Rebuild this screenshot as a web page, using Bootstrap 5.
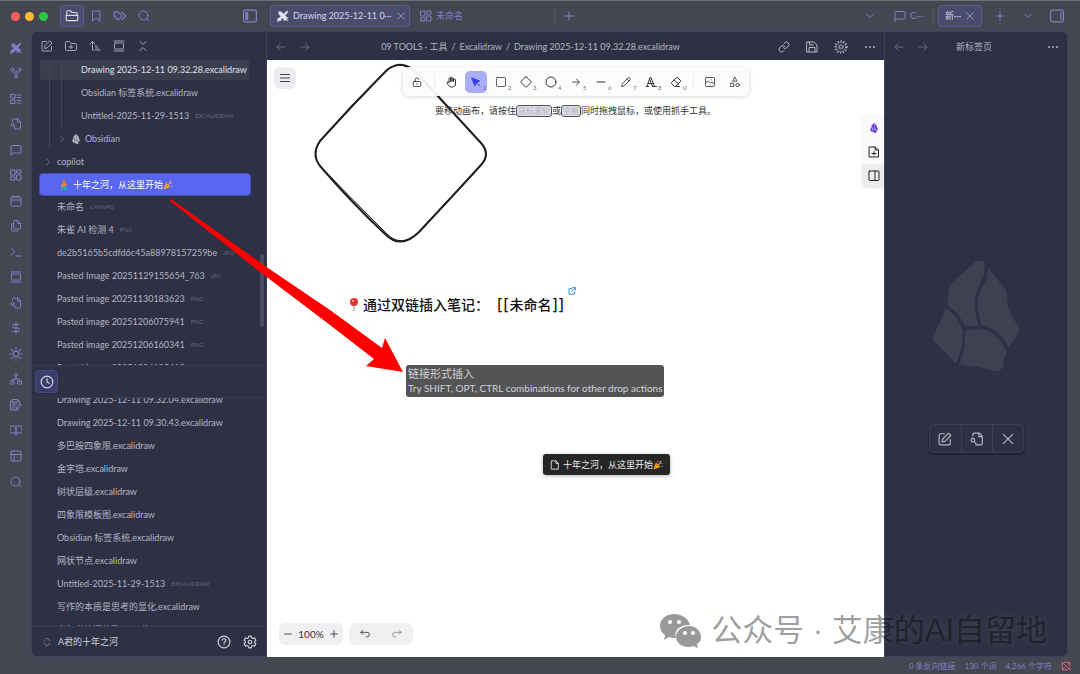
<!DOCTYPE html>
<html lang="zh-CN">
<head>
<meta charset="utf-8">
<meta name="viewport" content="width=device-width, initial-scale=1">
<title>Obsidian</title>
<link rel="stylesheet" href="https://cdn.jsdelivr.net/npm/bootstrap@5.3.0/dist/css/bootstrap.min.css">
<style>
  :root { --frame:#444652; --panel:#2e3044; --edge:#3d3f5e; --accent:#7f81c6; --txt:#b4b5c3; --dim:#8b8d9f; --faint:#66687b; }
  body { font-family:Lato,"Noto Sans CJK SC",sans-serif; font-size:9px; line-height:14px; color:var(--txt); background:var(--frame); }
  .app { border-top:1px solid #6c6e79; overflow:hidden; }
  svg { display:block; flex:none; }
  .ic { width:14px; height:14px; fill:none; stroke:currentColor; stroke-width:2; stroke-linecap:round; stroke-linejoin:round; }
  .ic-s { width:12px; height:12px; }
  .ic-xs { width:10px; height:10px; }
  button { background:none; border:0; padding:0; color:inherit; display:flex; align-items:center; justify-content:center; }
  a { color:inherit; text-decoration:none; }

  .topbar { height:30px; color:var(--accent); }
  .top-left { width:266px; padding:0 9px 0 11px; }
  .top-right { width:196px; padding-left:4px; }
  .lights { gap:5px; }
  .light { width:9px; height:9px; border-radius:50%; }
  .tool { width:24px; height:22px; border-radius:4px; border:1px solid transparent; }
  .tool-on, .tab-on { background:#4a4c6c; border:1px solid #5a5d8e; color:#d6d7e4; }
  .tab-item { height:22px; border-radius:4px; padding:0 6px; gap:4px; white-space:nowrap; }
  .tab-wide { width:140px; justify-content:flex-start; }
  .tab-on .ic-xs { color:#9a9cdc; }
  .rule { width:1px; height:14px; background:#53566a; }

  .ribbon { width:31px; color:var(--accent); }
  .ribbon nav { height:74%; padding-top:4px; }
  .ribbon button { flex:1 1 0; width:100%; }
  .side { width:236px; background:var(--panel); border:1px solid var(--edge); border-radius:6px 0 0 6px; overflow:hidden; }
  .side-tools { height:28px; padding:0 9px; gap:12px; color:#a3a5b5; }
  .files { overflow:hidden; position:relative; }
  .files-main { flex:306 1 0; }
  .files-recent { flex:228 1 0; }
  .files-recent .file:first-child { margin-top:5px; }
  .file { height:23px; padding-left:25px; gap:6px; white-space:nowrap; flex:none; }
  .in1 { padding-left:49px; }
  .file small { font-size:6px; color:var(--faint); }
  .file-on, .file-pick { height:21px; border-radius:3px; }
  .file-on { margin:-1px 17px 1px 8px; padding-left:41px; background:#3c3e50; color:#dfe0e8; }
  .file-pick { margin:1px 16px 0 8px; padding-left:18px; background:#5865ee; gap:3px; color:#fff; box-shadow:0 0 0 1px #484bb0; }
  .fold { padding-left:11px; gap:4px; }
  .guide { position:absolute; top:0; width:1px; background:#45475a; }
  .thumb { position:absolute; right:2px; width:4px; height:73px; border-radius:2px; background:#4a4c5f; top:194px; }
  .recent-head { height:33px; border-top:1px solid #383a50; border-bottom:1px solid #383a50; padding:0 3px; }
  .recent-head button { width:23px; height:23px; border-radius:4px; background:#3a3d68; border:1px solid #484b86; color:#d6d7e4; }
  .vault { height:30px; border-top:1px solid #3a3c52; padding:0 9px 0 10px; color:#d0d1dc; }
  .vault button { gap:6px; }

  .view-head { height:29px; padding-top:1px; background:var(--panel); border-top:1px solid var(--edge); }
  .canvas { background:#fff; position:relative; overflow:hidden; color:#333; }
  .shape { position:absolute; left:47px; top:2px; }
  .menu-btn { position:absolute; left:7px; top:7px; width:22px; height:22px; border-radius:6px; background:#ececf0; color:#444; }
  .xtools { position:absolute; left:50%; top:7px; transform:translateX(-50%); height:29px; padding:0 3px; border-radius:6px; background:rgba(252,252,252,.94); box-shadow:0 1px 4px rgba(0,0,0,.16); }
  .xtools button { width:22px; height:22px; margin-right:3px; border-radius:5px; position:relative; color:#333; }
  .xtools button:last-child { margin-right:0; }
  .xtools sub { position:absolute; right:0; bottom:2px; font-size:6px; line-height:6px; color:#777; }
  .xtools .picked { background:#a8adf6; color:#3a3ce0; }
  .xtools .picked sub { color:#5558e0; }
  .xtools .rule { background:#eee; margin:0 5px 0 3px; }
  .hint { position:absolute; left:0; right:0; top:44px; white-space:nowrap; }
  .hint kbd { font:inherit; line-height:10px; font-size:8px; color:#b4b4cc; background:#dcdce2; border:1px solid #555; border-radius:3px; padding:0 1px; }
  .floatbar { position:absolute; right:0; top:56px; width:22px; border-radius:6px 0 0 6px; background:#fafafa; box-shadow:0 0 2px rgba(0,0,0,.14); color:#222; overflow:hidden; }
  .floatbar button { width:100%; height:24px; padding-left:2px; }
  .floatbar .lit { background:#ededed; }
  .note { position:absolute; left:82px; top:227px; font-size:14px; line-height:36px; font-weight:500; color:#111; white-space:nowrap; }
  .note b { font-family:"DejaVu Sans",sans-serif; font-size:16px; font-weight:400; line-height:1; }
  .tip { position:absolute; left:139px; top:305px; padding:2px; line-height:14px; font-size:11px; border-radius:3px; background:#545454; color:#d2d2dc; white-space:nowrap; }
  .tip p { margin:0; }
  .tip p + p { font-size:10px; }
  .ghost { position:absolute; left:276px; top:394px; height:21px; padding:0 7px; gap:3px; border-radius:3px; background:#262626; color:#eee; box-shadow:0 1px 4px rgba(0,0,0,.3); white-space:nowrap; }
  .zoomer { position:absolute; left:12px; bottom:12px; gap:6px; color:#333; }
  .zoomer > div { width:64px; height:22px; border-radius:6px; background:#f0f0f2; }
  .zoomer .pct { font-size:10px; }

  .right { width:184px; background:var(--panel); border:1px solid var(--edge); border-radius:0 6px 6px 0; }
  .right .view-head { border:0; height:28px; background:none; }
  .crystal { color:#3f4153; margin-top:200px; }
  .acts { margin-top:52px; border-radius:4px; border:1px solid #3b3d50; box-shadow:0 1px 2px rgba(0,0,0,.5); color:#b4b5c3; }
  .acts button { width:31px; height:27px; }
  .acts button + button { border-left:1px solid #3d3f5c; }
  .gutter { width:12px; }
  .status { height:17px; padding:0 9px; gap:9px; color:var(--accent); font-size:8px; }
  .arrow { position:absolute; left:168px; top:197px; pointer-events:none; }
  .mark-line { position:absolute; right:33px; bottom:23px; font-size:31px; line-height:40px; gap:9px; color:rgba(0,0,0,.4); text-shadow:0 0 8px rgba(255,255,255,.12); font-family:"Liberation Sans","Noto Sans CJK SC",sans-serif; white-space:nowrap; pointer-events:none; }
</style>
</head>
<body>
<svg width="0" height="0" class="position-absolute" aria-hidden="true">
  <symbol id="folder-open" viewBox="0 0 24 24"><path d="M3 11V5a2 2 0 0 1 2-2h4l3 3h7a2 2 0 0 1 2 2v3M2 11h20v7a2 2 0 0 1-2 2H4a2 2 0 0 1-2-2z"/></symbol>
  <symbol id="bookmark" viewBox="0 0 24 24"><path d="m19 22-7-6-7 6V2h14z"/></symbol>
  <symbol id="tags" viewBox="0 0 24 24"><path d="M9 5H2v7l6.3 6.3a1 1 0 0 0 1.4 0l5.6-5.6a1 1 0 0 0 0-1.4zM6 9h.01M15 5l6.3 6.3a1 1 0 0 1 0 1.4L16 18"/></symbol>
  <symbol id="search" viewBox="0 0 24 24"><circle cx="11" cy="11" r="9"/><path d="m22 22-4-4"/></symbol>
  <symbol id="side-l" viewBox="0 0 24 24"><rect x="1" y="2" width="22" height="20" rx="3"/><path d="M5 6h3v12H5z" fill="currentColor"/></symbol>
  <symbol id="side-r" viewBox="0 0 24 24"><rect x="1" y="2" width="22" height="20" rx="3"/><path d="M19 6v12"/></symbol>
  <symbol id="swords" viewBox="0 0 24 24"><path d="M4 3l5 1 4 4 6-5 3-1-1 3-5 6 4 4 1-1 1 1-3 3 3 3-1 1-3-3-3 3-1-1 1-1-4-4-4 4 1 1-1 1-3-1-3 3-1-1 2-3-1-3 1-1 1 1 5-4-4-4z" fill="currentColor" stroke-width="1"/></symbol>
  <symbol id="x" viewBox="0 0 24 24"><path d="M20 4 4 20M4 4l16 16"/></symbol>
  <symbol id="plus" viewBox="0 0 24 24"><path d="M4 12h16M12 4v16"/></symbol>
  <symbol id="minus" viewBox="0 0 24 24"><path d="M4 12h16"/></symbol>
  <symbol id="down" viewBox="0 0 24 24"><path d="m5 8 7 7 7-7"/></symbol>
  <symbol id="next" viewBox="0 0 24 24"><path d="m9 5 7 7-7 7"/></symbol>
  <symbol id="grid4" viewBox="0 0 24 24"><path d="M2 2h8v10H2zM14 2h8v6h-8zM14 12h8v10h-8zM2 16h8v6H2z"/></symbol>
  <symbol id="msg" viewBox="0 0 24 24"><path d="M2 22V5a2 2 0 0 1 2-2h16a2 2 0 0 1 2 2v11a2 2 0 0 1-2 2H6z"/></symbol>
  <symbol id="fork" viewBox="0 0 24 24"><circle cx="12" cy="19" r="3"/><circle cx="5" cy="5" r="3"/><circle cx="19" cy="5" r="3"/><circle cx="12" cy="9" r="1"/><path d="M5 8c0 4 3 4 7 5 4-1 7-1 7-5M12 13v3"/></symbol>
  <symbol id="list" viewBox="0 0 24 24"><path d="M2 3h8v7H2zM2 14h8v7H2zM14 4h8M14 9h8M14 15h8M14 20h8"/></symbol>
  <symbol id="file-search" viewBox="0 0 24 24"><path d="M5 7V4a2 2 0 0 1 2-2h9l5 5v13a2 2 0 0 1-2 2h-9M15 2v6h6"/><circle cx="5" cy="14" r="3"/><path d="m8 17 3 4"/></symbol>
  <symbol id="cal" viewBox="0 0 24 24"><rect x="2" y="4" width="20" height="18" rx="2"/><path d="M8 1v5M16 1v5M2 10h20"/></symbol>
  <symbol id="files" viewBox="0 0 24 24"><path d="M21 7h-4a2 2 0 0 1-2-2V1H9a2 2 0 0 0-2 2v13a2 2 0 0 0 2 2h10a2 2 0 0 0 2-2V7zM15 1l6 6M3 7v13a2 2 0 0 0 2 2h10"/></symbol>
  <symbol id="term" viewBox="0 0 24 24"><path d="m2 18 8-7-8-7M12 20h10"/></symbol>
  <symbol id="cards" viewBox="0 0 24 24"><path d="M2 2h20M2 22h20"/><rect x="3" y="6" width="18" height="12" rx="1"/></symbol>
  <symbol id="dollar" viewBox="0 0 24 24"><path d="M12 1v22M18 5H9a3 3 0 0 0 0 7h6a3 3 0 0 1 0 7H5"/></symbol>
  <symbol id="sun" viewBox="0 0 24 24"><circle cx="12" cy="12" r="5"/><path d="M12 1v2M12 21v2M4 4l2 2M18 18l2 2M1 12h2M21 12h2M6 18l-2 2M20 4l-2 2"/></symbol>
  <symbol id="tree" viewBox="0 0 24 24"><circle cx="12" cy="4" r="3"/><path d="M1 16h7v6H1zM16 16h7v6h-7zM5 16v-4h14v4M12 12V8"/></symbol>
  <symbol id="clip" viewBox="0 0 24 24"><path d="M16 4h3v4M5 4H1v18h15v-3M5 1h10v5H5zM5 10h8M5 14h5M5 18h5M13 19l1-4 7-6 2 3-7 6z"/></symbol>
  <symbol id="book" viewBox="0 0 24 24"><path d="M1 4h8a3 3 0 0 1 3 3v14a3 3 0 0 0-3-3H1zM23 4h-8a3 3 0 0 0-3 3v14a3 3 0 0 1 3-3h8z"/></symbol>
  <symbol id="layout" viewBox="0 0 24 24"><rect x="2" y="2" width="20" height="20" rx="2"/><path d="M2 9h20M8 9v13"/></symbol>
  <symbol id="edit" viewBox="0 0 24 24"><path d="M11 3H4a2 2 0 0 0-2 2v15a2 2 0 0 0 2 2h15a2 2 0 0 0 2-2v-7M18 2l4 4-10 10-5 1 1-5z"/></symbol>
  <symbol id="folder-plus" viewBox="0 0 24 24"><path d="M3 21a2 2 0 0 1-2-2V5a2 2 0 0 1 2-2h6l3 4h9a2 2 0 0 1 2 2v10a2 2 0 0 1-2 2zM12 10v7M8 14h8"/></symbol>
  <symbol id="sort" viewBox="0 0 24 24"><path d="m2 8 5-5 5 5M7 3v17h3M13 12h3M13 16h6M13 20h9"/></symbol>
  <symbol id="fold" viewBox="0 0 24 24"><path d="m6 21 6-6 6 6M6 3l6 6 6-6"/></symbol>
  <symbol id="updown" viewBox="0 0 24 24"><path d="m5 15 7 7 7-7M5 9l7-7 7 7"/></symbol>
  <symbol id="clock" viewBox="0 0 24 24"><circle cx="12" cy="12" r="10"/><path d="M12 6v6l4 2"/></symbol>
  <symbol id="help" viewBox="0 0 24 24"><circle cx="12" cy="12" r="10"/><path d="M9 9a3 3 0 0 1 6 1c0 2-3 2-3 4M12 17v.01"/></symbol>
  <symbol id="gear" viewBox="0 0 24 24"><path d="M10 2h4l1 3 2 1 3-1 2 4-2 2v2l2 2-2 4-3-1-2 1-1 3h-4l-1-3-2-1-3 1-2-4 2-2v-2L2 9l2-4 3 1 2-1z"/><circle cx="12" cy="12" r="3"/></symbol>
  <symbol id="cog" viewBox="0 0 24 24"><circle cx="12" cy="12" r="10" stroke-width="3" stroke-dasharray="2 3" stroke-linecap="butt"/><circle cx="12" cy="12" r="8" stroke-width="1"/><circle cx="12" cy="12" r="4" stroke-width="1"/><path d="M10 10h4v4h-4z" stroke-width="1"/></symbol>
  <symbol id="left" viewBox="0 0 24 24"><path d="m11 19-7-7 7-7M20 12H4"/></symbol>
  <symbol id="right" viewBox="0 0 24 24"><path d="m13 5 7 7-7 7M4 12h16"/></symbol>
  <symbol id="link" viewBox="0 0 24 24"><path d="M10 13a5 5 0 0 0 7 1l4-4a5 5 0 0 0-7-7l-2 2M14 11a5 5 0 0 0-7-1l-4 4a5 5 0 0 0 7 7l2-2"/></symbol>
  <symbol id="save" viewBox="0 0 24 24"><path d="M2 2h14l6 6v14H2zM7 2v6h8M6 22v-9h12v9"/></symbol>
  <symbol id="dots" viewBox="0 0 24 24"><path d="M4 12h.01M12 12h.01M20 12h.01" stroke-width="4"/></symbol>
  <symbol id="menu" viewBox="0 0 24 24"><path d="M3 5h18M3 12h18M3 19h18"/></symbol>
  <symbol id="lock" viewBox="0 0 24 24"><rect x="3" y="11" width="18" height="12" rx="2"/><path d="M8 11V6a4 4 0 0 1 8 0M12 16v2"/></symbol>
  <symbol id="hand" viewBox="0 0 24 24"><path d="M8 13V5a2 2 0 0 1 3 0v6V3a2 2 0 0 1 3 0v8V5a2 2 0 0 1 3 0v7V8a2 2 0 0 1 4 0v8c0 4-3 6-7 6-4 0-6-1-8-5l-2-3a2 2 0 0 1 4-1z"/></symbol>
  <symbol id="cursor" viewBox="0 0 24 24"><path d="m4 4 15 6-6 3-3 6z" fill="currentColor"/><path d="m14 14 6 6"/></symbol>
  <symbol id="rect" viewBox="0 0 24 24"><rect x="1" y="1" width="22" height="22" rx="3"/></symbol>
  <symbol id="diamond" viewBox="0 0 24 24"><path d="m13 2 9 9q1 1 0 2l-9 9q-1 1-2 0l-9-9q-1-1 0-2l9-9q1-1 2 0z"/></symbol>
  <symbol id="circle" viewBox="0 0 24 24"><circle cx="12" cy="12" r="10"/></symbol>
  <symbol id="pencil" viewBox="0 0 24 24"><path d="m2 22 1-6L17 2q2-1 4 1t1 4L8 21zM14 5l5 5"/></symbol>
  <symbol id="glyph" viewBox="0 0 24 24"><path d="M2 21h5M15 21h8M4 21l6-18h2l7 18M7 15h9M9 6l6 15"/></symbol>
  <symbol id="eraser" viewBox="0 0 24 24"><path d="M19 21H9l-6-6q-1-1 0-2L13 3q1-1 2 0l6 6q1 1 0 2L11 21M8 8l9 8"/></symbol>
  <symbol id="image" viewBox="0 0 24 24"><rect x="1" y="1" width="22" height="22" rx="3"/><path d="m2 14 6-4 6 5 3-3 5 4M16 7h.01"/></symbol>
  <symbol id="shapes" viewBox="0 0 24 24"><path d="m12 1 5 9H7zM1 15h8v8H1z"/><circle cx="18" cy="19" r="4"/></symbol>
  <symbol id="file" viewBox="0 0 24 24"><path d="M4 2h10l6 6v14H4zM14 2v6h6"/></symbol>
  <symbol id="file-plus" viewBox="0 0 24 24"><path d="M3 2h11l7 6v14H3zM14 2v6h7M12 11v7M8 15h8"/></symbol>
  <symbol id="panel" viewBox="0 0 24 24"><rect x="2" y="2" width="20" height="19" rx="1"/><path d="M14 2v19"/></symbol>
  <symbol id="ext" viewBox="0 0 24 24"><path d="M11 5H3v17h16v-8M14 2h8v8M22 2 11 13" stroke-width="3"/></symbol>
  <symbol id="undo" viewBox="0 0 24 24"><path d="M7 3 2 8l5 5M2 8h15a5 5 0 0 1 0 11h-2"/></symbol>
  <symbol id="redo" viewBox="0 0 24 24"><path d="m17 3 5 5-5 5M22 8H7a5 5 0 0 0 0 11h2"/></symbol>
  <symbol id="nosync" viewBox="0 0 24 24"><path d="M2 2l20 20M8 3h13v9M21 3l-5 5M3 8v13h12M3 21l6-6M3 3v3M21 16v5"/></symbol>
  <symbol id="crystal" viewBox="100 59 260 334"><g fill="currentColor" stroke="none"><path d="M152 130 228 64Q238 57 250 62 254 66 254 90 253 105 245 118 228 150 224 180 224 215 232 240L236 255Q215 255 195 257 180 218 143 193L147 150Q148 135 152 130Z"/><path d="M264 81 316 145Q319 150 320 160 322 190 326 205 332 222 352 252 360 265 358 272L326 321Q303 267 246 255 228 195 235 170 242 148 258 120 264 105 264 81Z"/><path d="M138 203Q178 230 188 270 192 320 168 367L104 302Q99 296 101 288Z"/><path d="M197 270Q240 260 270 272 305 293 320 334 309 360 310 375 303 393 285 392 235 376 178 372 198 325 197 270Z"/></g></symbol>
  <symbol id="party" viewBox="0 0 24 24"><path d="m1 23 6-17 11 11z" fill="#f6b21b"/><path d="m4 15 5 6M6 9l9 10" stroke="#c9661c" stroke-width="2"/><path d="M9 8q4-2 3-7M14 12q3-5 9-4" stroke="#e8508a" stroke-width="2" fill="none"/><path d="M16 3h3v3h-3zM20 14h3v3h-3z" fill="#6fb8f2"/><path d="M12 11q6-2 8-8" stroke="#f1d04a" stroke-width="2" fill="none"/></symbol>
  <symbol id="walker" viewBox="0 0 24 24"><circle cx="12" cy="4" r="3" fill="#c9743c"/><path d="m9 8 6 0 4 5-4 0 0 3H9l-4-2z" fill="#ee8a2a"/><path d="m10 15-3 8M13 15l3 8" stroke="#25b0b0" stroke-width="4"/></symbol>
</svg>

<div class="app d-flex flex-column vh-100 position-relative">
  <header class="topbar d-flex">
    <div class="top-left d-flex align-items-center">
      <div class="lights d-flex"><span class="light" style="background:#ff5f57"></span><span class="light" style="background:#febc2e"></span><span class="light" style="background:#28c840"></span></div>
      <div class="d-flex ms-2 ps-1">
        <button class="tool tool-on" aria-label="文件列表"><svg class="ic"><use href="#folder-open"/></svg></button>
        <button class="tool" aria-label="书签"><svg class="ic ic-s"><use href="#bookmark"/></svg></button>
        <button class="tool" aria-label="标签"><svg class="ic"><use href="#tags"/></svg></button>
        <button class="tool" aria-label="搜索"><svg class="ic ic-s"><use href="#search"/></svg></button>
      </div>
      <button class="ms-auto" aria-label="折叠侧栏"><svg class="ic"><use href="#side-l"/></svg></button>
    </div>
    <div class="flex-fill d-flex align-items-center ps-1 pe-2">
      <button class="tab-item tab-wide tab-on"><svg class="ic ic-s" style="color:#e4e4ee"><use href="#swords"/></svg><span>Drawing 2025-12-11 0···</span><svg class="ic ic-xs ms-auto"><use href="#x"/></svg></button>
      <button class="tab-item tab-wide ms-1"><svg class="ic ic-s"><use href="#grid4"/></svg><span>未命名</span></button>
      <span class="rule"></span>
      <button class="ms-2" aria-label="新标签页"><svg class="ic ic-s"><use href="#plus"/></svg></button>
      <button class="ms-auto" aria-label="标签列表"><svg class="ic ic-s"><use href="#down"/></svg></button>
    </div>
    <div class="top-right d-flex align-items-center">
      <button class="tab-item"><svg class="ic ic-s"><use href="#msg"/></svg><span>C···</span></button>
      <span class="rule ms-1 me-1"></span>
      <button class="tab-item tab-on"><span>新···</span><svg class="ic ic-xs"><use href="#x"/></svg></button>
      <button class="ms-2 ps-1" aria-label="新标签页"><svg class="ic ic-s"><use href="#plus"/></svg></button>
      <button class="ms-auto me-3" aria-label="标签列表"><svg class="ic ic-s"><use href="#down"/></svg></button>
      <button class="me-3" aria-label="折叠侧栏"><svg class="ic"><use href="#side-r"/></svg></button>
    </div>
  </header>

  <main class="d-flex flex-fill" style="min-height:0">
    <aside class="ribbon">
      <nav class="d-flex flex-column" aria-label="功能区">
        <button aria-label="Excalidraw"><svg class="ic ic-s"><use href="#swords"/></svg></button>
        <button aria-label="关系图谱"><svg class="ic ic-s"><use href="#fork"/></svg></button>
        <button aria-label="看板"><svg class="ic ic-s"><use href="#list"/></svg></button>
        <button aria-label="查找文件"><svg class="ic ic-s"><use href="#file-search"/></svg></button>
        <button aria-label="聊天"><svg class="ic ic-s"><use href="#msg"/></svg></button>
        <button aria-label="白板"><svg class="ic ic-s"><use href="#grid4"/></svg></button>
        <button aria-label="日记"><svg class="ic ic-s"><use href="#cal"/></svg></button>
        <button aria-label="模板"><svg class="ic ic-s"><use href="#files"/></svg></button>
        <button aria-label="命令"><svg class="ic ic-s"><use href="#term"/></svg></button>
        <button aria-label="幻灯片"><svg class="ic ic-s"><use href="#cards"/></svg></button>
        <button aria-label="快速切换"><svg class="ic ic-s"><use href="#file-search"/></svg></button>
        <button aria-label="账目"><svg class="ic ic-s"><use href="#dollar"/></svg></button>
        <button aria-label="主题"><svg class="ic"><use href="#sun"/></svg></button>
        <button aria-label="结构"><svg class="ic ic-s"><use href="#tree"/></svg></button>
        <button aria-label="任务"><svg class="ic ic-s"><use href="#clip"/></svg></button>
        <button aria-label="阅读"><svg class="ic ic-s"><use href="#book"/></svg></button>
        <button aria-label="布局"><svg class="ic ic-s"><use href="#layout"/></svg></button>
        <button aria-label="搜索"><svg class="ic ic-s"><use href="#search"/></svg></button>
      </nav>
    </aside>

    <section class="side d-flex flex-column">
      <div class="side-tools d-flex align-items-center">
        <button aria-label="新建笔记"><svg class="ic ic-s"><use href="#edit"/></svg></button>
        <button aria-label="新建文件夹"><svg class="ic ic-s"><use href="#folder-plus"/></svg></button>
        <button aria-label="排序"><svg class="ic ic-s"><use href="#sort"/></svg></button>
        <button aria-label="自动定位"><svg class="ic ic-s"><use href="#cards"/></svg></button>
        <button aria-label="全部折叠"><svg class="ic ic-s"><use href="#fold"/></svg></button>
      </div>
      <div class="files files-main d-flex flex-column">
        <a href="#" class="file file-on d-flex align-items-center">Drawing 2025-12-11 09.32.28.excalidraw</a>
        <a href="#" class="file in1 d-flex align-items-center">Obsidian 标签系统.excalidraw</a>
        <a href="#" class="file in1 d-flex align-items-center">Untitled-2025-11-29-1513 <small>EXCALIDRAW</small></a>
        <a href="#" class="file d-flex align-items-center gap-1"><svg class="ic ic-xs" style="color:#777a8c"><use href="#next"/></svg><svg class="ic-xs"><use href="#crystal"/></svg>Obsidian</a>
        <a href="#" class="file fold d-flex align-items-center"><svg class="ic ic-xs" style="color:#777a8c"><use href="#next"/></svg>copilot</a>
        <a href="#" class="file file-pick d-flex align-items-center"><svg class="ic-s"><use href="#walker"/></svg><span class="d-flex align-items-center">十年之河，从这里开始<svg class="ic-xs"><use href="#party"/></svg></span></a>
        <a href="#" class="file d-flex align-items-center">未命名 <small>CANVAS</small></a>
        <a href="#" class="file d-flex align-items-center">朱雀 AI 检测 4 <small>PNG</small></a>
        <a href="#" class="file d-flex align-items-center">de2b5165b5cdfd6c45a88978157259be <small>JPG</small></a>
        <a href="#" class="file d-flex align-items-center">Pasted Image 20251129155654_763 <small>JPG</small></a>
        <a href="#" class="file d-flex align-items-center">Pasted image 20251130183623 <small>PNG</small></a>
        <a href="#" class="file d-flex align-items-center">Pasted image 20251206075941 <small>PNG</small></a>
        <a href="#" class="file d-flex align-items-center">Pasted image 20251206160341 <small>PNG</small></a>
        <a href="#" class="file d-flex align-items-center">Pasted image 20251206185418 <small>PNG</small></a>
        <span class="guide" style="left:17px;height:88px"></span>
        <span class="guide" style="left:29px;height:66px"></span>
        <span class="thumb"></span>
      </div>
      <div class="recent-head d-flex align-items-center"><button aria-label="最近文件"><svg class="ic"><use href="#clock"/></svg></button></div>
      <div class="files files-recent d-flex flex-column justify-content-center">
        <a href="#" class="file d-flex align-items-center">Drawing 2025-12-11 09.32.04.excalidraw</a>
        <a href="#" class="file d-flex align-items-center">Drawing 2025-12-11 09.30.43.excalidraw</a>
        <a href="#" class="file d-flex align-items-center">多巴胺四象限.excalidraw</a>
        <a href="#" class="file d-flex align-items-center">金字塔.excalidraw</a>
        <a href="#" class="file d-flex align-items-center">树状层级.excalidraw</a>
        <a href="#" class="file d-flex align-items-center">四象限模板图.excalidraw</a>
        <a href="#" class="file d-flex align-items-center">Obsidian 标签系统.excalidraw</a>
        <a href="#" class="file d-flex align-items-center">网状节点.excalidraw</a>
        <a href="#" class="file d-flex align-items-center">Untitled-2025-11-29-1513 <small>EXCALIDRAW</small></a>
        <a href="#" class="file d-flex align-items-center">写作的本质是思考的显化.excalidraw</a>
        <a href="#" class="file d-flex align-items-center">个年书籍问卦欧 3-(0 节)</a>
      </div>
      <div class="vault d-flex align-items-center">
        <button><svg class="ic ic-xs" style="color:#8b8d9f"><use href="#updown"/></svg>A君的十年之河</button>
        <button class="ms-auto me-2" aria-label="帮助"><svg class="ic"><use href="#help"/></svg></button>
        <button class="ms-1" aria-label="设置"><svg class="ic"><use href="#gear"/></svg></button>
      </div>
    </section>

    <section class="flex-fill d-flex flex-column" style="min-width:0">
      <div class="view-head d-flex align-items-center px-2 gap-2">
        <button style="color:var(--faint)" aria-label="后退"><svg class="ic ic-s"><use href="#left"/></svg></button>
        <button style="color:var(--faint)" class="ms-1" aria-label="前进"><svg class="ic ic-s"><use href="#right"/></svg></button>
        <nav class="flex-fill d-flex justify-content-center gap-1 pe-4 me-1" aria-label="路径"><a href="#">09 TOOLS · 工具</a><span>/</span><a href="#">Excalidraw</a><span>/</span><a href="#">Drawing 2025-12-11 09.32.28.excalidraw</a></nav>
        <button aria-label="复制链接"><svg class="ic ic-s"><use href="#link"/></svg></button>
        <button class="ms-2" aria-label="保存"><svg class="ic ic-s"><use href="#save"/></svg></button>
        <button class="ms-2" aria-label="设置"><svg class="ic"><use href="#cog"/></svg></button>
        <button class="ms-2" aria-label="更多"><svg class="ic ic-s"><use href="#dots"/></svg></button>
      </div>
      <div class="canvas flex-fill">
        <svg class="shape" width="174" height="182" viewBox="0 0 174 182" fill="none" stroke="#1e1e1e" stroke-width="2"><path d="M73 8Q87-3 101 9Q135 46 167 81Q177 92 167 103Q136 137 105 170Q87 188 71 172Q38 141 6 104Q-3 92 6 79Q38 43 73 8Z"/><path d="M74 7Q88-2 100 10Q134 45 166 80Q178 92 166 104Q135 138 103 172Q86 186 72 171Q39 138 7 105Q-4 93 7 78Q40 43 74 7Z" stroke-width="1"/></svg>
        <button class="menu-btn" aria-label="菜单"><svg class="ic ic-s"><use href="#menu"/></svg></button>
        <div class="xtools d-flex align-items-center">
          <button aria-label="锁定"><svg class="ic ic-xs"><use href="#lock"/></svg></button><span class="rule"></span>
          <button aria-label="抓手"><svg class="ic ic-s"><use href="#hand"/></svg></button>
          <button class="picked" aria-label="选择"><svg class="ic ic-s"><use href="#cursor"/></svg><sub>1</sub></button>
          <button aria-label="矩形"><svg class="ic ic-xs"><use href="#rect"/></svg><sub>2</sub></button>
          <button aria-label="菱形"><svg class="ic ic-s"><use href="#diamond"/></svg><sub>3</sub></button>
          <button aria-label="椭圆"><svg class="ic ic-s"><use href="#circle"/></svg><sub>4</sub></button>
          <button aria-label="箭头"><svg class="ic ic-xs"><use href="#right"/></svg><sub>5</sub></button>
          <button aria-label="线条"><svg class="ic ic-s"><use href="#minus"/></svg><sub>6</sub></button>
          <button aria-label="画笔"><svg class="ic ic-xs"><use href="#pencil"/></svg><sub>7</sub></button>
          <button aria-label="文字"><svg class="ic ic-s"><use href="#glyph"/></svg><sub>8</sub></button>
          <button aria-label="橡皮"><svg class="ic ic-s"><use href="#eraser"/></svg><sub>0</sub></button><span class="rule"></span>
          <button aria-label="图片"><svg class="ic ic-xs"><use href="#image"/></svg></button>
          <button aria-label="更多工具"><svg class="ic ic-xs"><use href="#shapes"/></svg></button>
        </div>
        <div class="hint d-flex justify-content-center align-items-center">要移动画布，请按住<kbd>鼠标滚轮</kbd>或<kbd>空格</kbd>同时拖拽鼠标，或使用抓手工具。</div>
        <div class="floatbar">
          <button aria-label="Obsidian"><svg class="ic-xs" style="color:#6d3fd0"><use href="#crystal"/></svg></button>
          <button aria-label="插入文件"><svg class="ic ic-s"><use href="#file-plus"/></svg></button>
          <button class="lit" aria-label="侧栏"><svg class="ic ic-s"><use href="#panel"/></svg></button>
        </div>
        <div class="note d-flex align-items-center">
          <svg width="10" height="14" viewBox="0 0 10 14" class="me-1"><path d="M5 7v6" stroke="#888" stroke-width="1"/><circle cx="5" cy="4" r="4" fill="#e0352f"/><circle cx="4" cy="3" r="1" fill="#ffb0a8"/></svg>
          <span>通过双链插入笔记：</span><a href="#" class="ms-2 d-flex align-items-center"><b>[[</b>未命名<b>]]</b></a>
          <a href="#" class="align-self-start ms-1" style="color:#3b8fd6" aria-label="打开链接"><svg class="ic" style="width:8px;height:8px"><use href="#ext"/></svg></a>
        </div>
        <div class="tip"><p>链接形式插入</p><p>Try SHIFT, OPT, CTRL combinations for other drop actions</p></div>
        <div class="ghost d-flex align-items-center"><svg class="ic ic-xs"><use href="#file"/></svg><span class="d-flex align-items-center">十年之河，从这里开始<svg class="ic-xs"><use href="#party"/></svg></span></div>
        <div class="zoomer d-flex">
          <div class="d-flex align-items-center justify-content-between px-1"><button aria-label="缩小"><svg class="ic ic-xs"><use href="#minus"/></svg></button><button class="pct">100%</button><button aria-label="放大"><svg class="ic ic-xs"><use href="#plus"/></svg></button></div>
          <div class="d-flex align-items-center justify-content-around"><button aria-label="撤销"><svg class="ic ic-xs"><use href="#undo"/></svg></button><button style="color:#888" aria-label="重做"><svg class="ic ic-xs"><use href="#redo"/></svg></button></div>
        </div>
      </div>
    </section>

    <section class="right d-flex flex-column align-items-center">
      <div class="view-head d-flex align-items-center align-self-stretch px-2 gap-2">
        <button style="color:var(--faint)" aria-label="后退"><svg class="ic ic-s"><use href="#left"/></svg></button>
        <button style="color:var(--faint)" class="ms-1" aria-label="前进"><svg class="ic ic-s"><use href="#right"/></svg></button>
        <span class="flex-fill text-center pe-4 me-1">新标签页</span>
        <button aria-label="更多"><svg class="ic ic-s"><use href="#dots"/></svg></button>
      </div>
      <svg class="crystal" width="87" height="112"><use href="#crystal"/></svg>
      <div class="acts d-flex">
        <button aria-label="新建笔记"><svg class="ic"><use href="#edit"/></svg></button>
        <button aria-label="打开文件"><svg class="ic"><use href="#file-search"/></svg></button>
        <button aria-label="关闭"><svg class="ic"><use href="#x"/></svg></button>
      </div>
    </section>
    <div class="gutter"></div>
  </main>

  <footer class="status d-flex align-items-center justify-content-end"><span>0 条反向链接</span><span>130 个词</span><span>4,266 个字符</span><svg class="ic ic-xs" style="color:#f0707c"><use href="#nosync"/></svg></footer>

  <svg class="arrow" width="236" height="176" viewBox="168 198 236 176"><path d="M171 199 268 268 330 310 382 348 385 338 403 372 366 366 374 359 330 325 264 275 170 201Z" fill="#fe0000"/></svg>
  <div class="mark-line d-flex align-items-center">
    <svg width="43" height="36" viewBox="0 0 43 36" fill="#999"><path d="M15 1C7 1 1 6 1 13c0 4 2 7 5 9l-1 5 5-3q3 1 6 1h1C14 17 22 11 31 12 29 5 23 1 15 1z"/><path d="M30 13c-7 0-13 5-13 11s6 10 13 10q2 0 4-1l5 2-1-4c3-2 4-4 4-7 0-6-5-11-12-11z"/><g fill="#fff"><circle cx="11" cy="9" r="2"/><circle cx="20" cy="9" r="2"/><circle cx="26" cy="20" r="2"/><circle cx="34" cy="20" r="2"/></g></svg>
    <span>公众号 · 艾康的AI自留地</span>
  </div>
</div>
<script src="https://cdn.jsdelivr.net/npm/bootstrap@5.3.0/dist/js/bootstrap.bundle.min.js"></script>
</body>
</html>
